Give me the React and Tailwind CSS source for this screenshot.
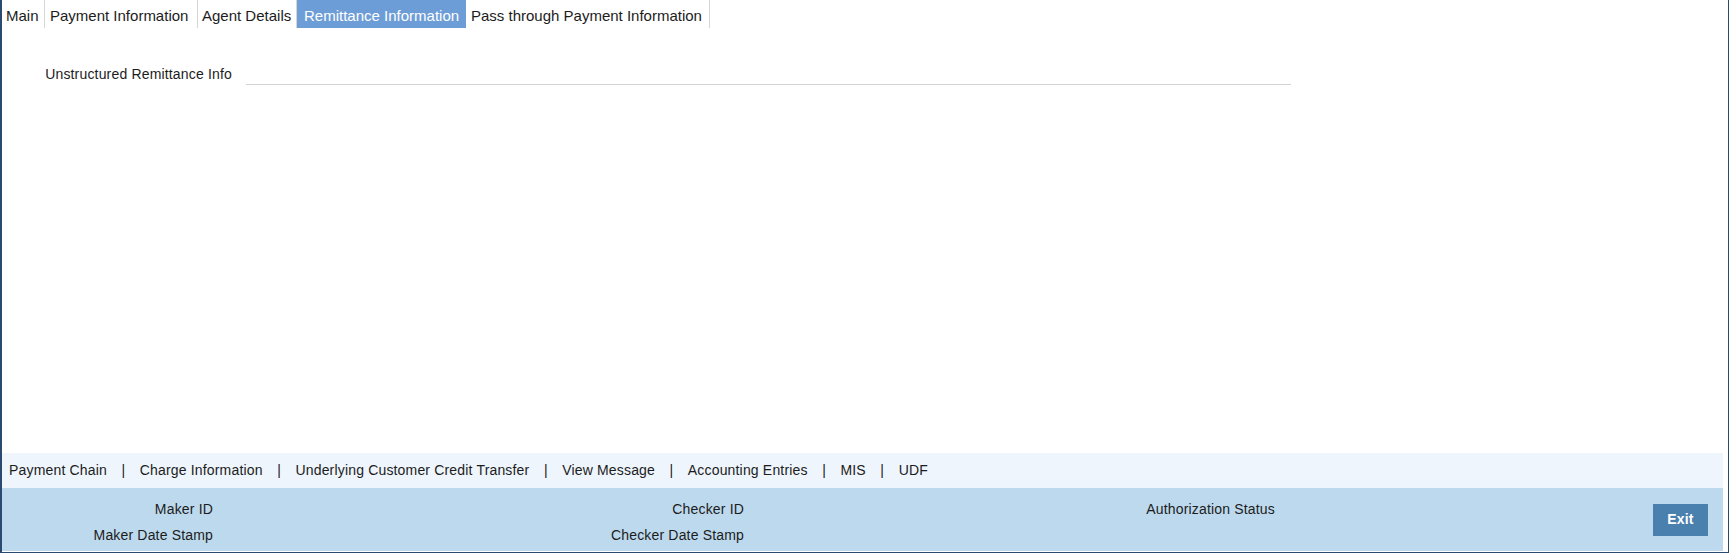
import React from 'react';

const tabs = [
  { label: 'Main', w: 'w-[43px]', pl: 'pl-[4px]' },
  { label: 'Payment Information', w: 'w-[153px]', pl: 'pl-[5px]' },
  { label: 'Agent Details', w: 'w-[99px]', pl: 'pl-[4px]' },
  { label: 'Remittance Information', w: 'w-[169px]', pl: 'pl-[7px]', active: true },
  { label: 'Pass through Payment Information', w: 'w-[244px]', pl: 'pl-[5px]' },
];

const links = [
  'Payment Chain',
  'Charge Information',
  'Underlying Customer Credit Transfer',
  'View Message',
  'Accounting Entries',
  'MIS',
  'UDF',
];

const auditCols = [
  ['Maker ID', 'Maker Date Stamp'],
  ['Checker ID', 'Checker Date Stamp'],
  ['Authorization Status', ''],
];

export default function App() {
  return (
    <div
      className="w-[1729px] h-[553px] bg-white border-l-2 border-r border-b border-[#2a4a70] flex flex-col text-[#1c1c1c]"
      style={{ fontFamily: '"Liberation Sans", Arial, sans-serif' }}
    >
      {/* Tabs */}
      <div className="flex h-[28px] text-[15px]">
        {tabs.map((t) => (
          <div
            key={t.label}
            className={`${t.w} ${t.pl} h-[28px] pt-[3px] leading-[25px] whitespace-nowrap ${
              t.active ? 'bg-[#6d9dd6] text-white' : 'border-r border-[#d6d6d6]'
            }`}
          >
            {t.label}
          </div>
        ))}
      </div>

      {/* Form body */}
      <div className="flex-1 pt-[36px] text-[14px] tracking-[0.17px]">
        <div className="flex items-start">
          <label className="w-[230px] text-right leading-[20px] whitespace-nowrap">
            Unstructured Remittance Info
          </label>
          <input
            type="text"
            className="ml-[14px] w-[1045px] h-[21px] border-b border-[#d3d3d3] outline-none bg-transparent"
          />
        </div>
      </div>

      {/* Sub-screen links */}
      <div className="mr-[5px] h-[35px] bg-[#eef5fc] pl-[7px] flex items-center text-[14px] tracking-[0.17px] leading-[35px] whitespace-nowrap">
        {links.map((l, i) => (
          <React.Fragment key={l}>
            {i > 0 && <span className="mx-[14.5px]">|</span>}
            <span>{l}</span>
          </React.Fragment>
        ))}
      </div>

      {/* Audit band */}
      <div className="mr-[5px] mb-[1px] h-[63px] bg-[#bdd9ed] flex items-center text-[14px] tracking-[0.17px]">
        <div className="grid grid-cols-[531px_531px_531px] self-start pt-[11px]">
          {auditCols.map((col) => (
            <div key={col[0]} className="flex flex-col gap-[6px]">
              {col.map((c, j) => (
                <div key={j} className="w-[211px] h-[20px] leading-[20px] text-right whitespace-nowrap">
                  {c}
                </div>
              ))}
            </div>
          ))}
        </div>
        <button className="ml-auto mr-[15px] w-[55px] h-[32px] bg-[#4a80ad] text-white font-bold text-[14px]">
          Exit
        </button>
      </div>
    </div>
  );
}
